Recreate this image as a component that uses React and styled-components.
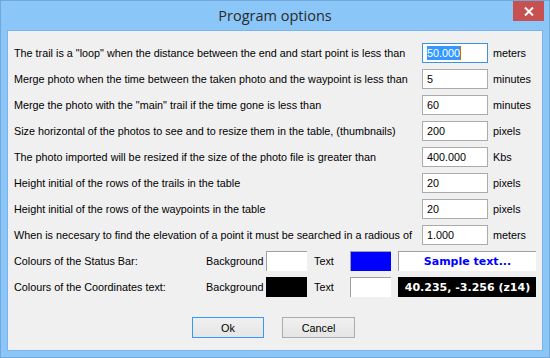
import React from "react";
import styled, { createGlobalStyle } from "styled-components";

const GlobalStyle = createGlobalStyle`
  html, body { margin: 0; padding: 0; }
  body { font-family: "Liberation Sans", Arial, sans-serif; }
  * { box-sizing: border-box; }
`;

const Window = styled.div`
  width: 550px;
  height: 358px;
  background: #8bc6f8;
  border: 1px solid #73a7da;
  display: flex;
  flex-direction: column;
`;

const TitleBar = styled.div`
  height: 29px;
  display: grid;
  grid-template-columns: 1fr auto 1fr;
  align-items: start;
`;

const Title = styled.div`
  grid-column: 2;
  font-family: "Open Sans", "Noto Sans", sans-serif;
  font-size: 14.5px;
  color: #2a2a2a;
  line-height: 30px;
`;

const CloseButton = styled.div`
  grid-column: 3;
  justify-self: end;
  width: 31px;
  height: 20px;
  margin-right: 5px;
  background: #c75050;
  display: flex;
  align-items: center;
  justify-content: center;
`;

const Client = styled.div`
  flex: 1;
  margin: 0 6px 6px 6px;
  background: #f0f0f0;
  border: 1px solid #7db3e8;
  padding: 12px 6px 0 6px;
  display: flex;
  flex-direction: column;
`;

const Rows = styled.div`
  display: flex;
  flex-direction: column;
  gap: 6px;
`;

const OptionRow = styled.div`
  display: grid;
  grid-template-columns: 408px 66px auto;
  align-items: center;
  height: 20px;
  font-size: 10.8px;
  color: #000;
`;

const Label = styled.span`
  white-space: nowrap;
`;

const Input = styled.div`
  height: 20px;
  border: 1px solid ${(p) => (p.$focused ? "#3f91e2" : "#ababab")};
  background: #fff;
  padding-left: 4px;
  display: flex;
  align-items: center;
  font-size: 10.8px;
`;

const Selected = styled.span`
  background: #3399ff;
  color: #fff;
  line-height: 14px;
  border-right: 1px solid #d06a00;
`;

const Unit = styled.span`
  padding-left: 5px;
`;

const ColourRow = styled.div`
  display: flex;
  align-items: center;
  height: 20px;
  font-size: 10.8px;
  color: #000;
`;

const ColourLabel = styled.span`
  width: ${(p) => p.$w}px;
  padding-left: ${(p) => p.$pl || 0}px;
  white-space: nowrap;
`;

const Swatch = styled.div`
  width: 41px;
  height: 20px;
  background: ${(p) => p.$color};
  border-top: 1px solid ${(p) => (p.$color === "#000000" ? "#000" : "#a0a0a0")};
  border-left: 1px solid ${(p) => (p.$color === "#000000" ? "#000" : "#a0a0a0")};
`;

const Sample = styled.div`
  width: 138px;
  height: 20px;
  margin-left: 7px;
  background: ${(p) => p.$bg};
  color: ${(p) => p.$fg};
  border-top: 1px solid ${(p) => (p.$bg === "#000000" ? "#000" : "#a0a0a0")};
  border-left: 1px solid ${(p) => (p.$bg === "#000000" ? "#000" : "#a0a0a0")};
  font-family: "DejaVu Sans", Verdana, sans-serif;
  font-weight: bold;
  font-size: 11px;
  display: flex;
  align-items: center;
  justify-content: center;
`;

const Buttons = styled.div`
  display: flex;
  justify-content: center;
  gap: 18px;
  margin-top: 20px;
  padding-right: 3px;
`;

const Button = styled.div`
  width: ${(p) => p.$w}px;
  height: 21px;
  border: 1px solid ${(p) => (p.$default ? "#3399ff" : "#acacac")};
  background: linear-gradient(#f0f0f0, #e5e5e5);
  font-size: 10.8px;
  display: flex;
  align-items: center;
  justify-content: center;
  color: #000;
`;

const options = [
  ['The trail is a "loop" when the distance between the end and start point is less than', "50.000", "meters", true],
  ["Merge photo when the time between the taken photo and the waypoint is less than", "5", "minutes"],
  ['Merge the photo with the "main" trail if the time gone is less than', "60", "minutes"],
  ["Size horizontal of the photos to see and to resize them in the table, (thumbnails)", "200", "pixels"],
  ["The photo imported will be resized if the size of the photo file is greater than", "400.000", "Kbs"],
  ["Height initial of the rows of the trails in the table", "20", "pixels"],
  ["Height initial of the rows of the waypoints in the table", "20", "pixels"],
  ["When is necesary to find the elevation of a point it must be searched in a radious of", "1.000", "meters"],
];

const colours = [
  ["Colours of the Status Bar:", "#ffffff", "#0000ff", "Sample text..."],
  ["Colours of the Coordinates text:", "#000000", "#ffffff", "40.235, -3.256 (z14)"],
];

export default function App() {
  return (
    <>
      <GlobalStyle />
      <Window>
        <TitleBar>
          <Title>Program options</Title>
          <CloseButton>
            <svg width="10" height="9" viewBox="0 0 10 9">
              <path d="M1 0.5 L9 8.5 M9 0.5 L1 8.5" stroke="#fff" strokeWidth="2" />
            </svg>
          </CloseButton>
        </TitleBar>
        <Client>
          <Rows>
            {options.map(([label, value, unit, focused]) => (
              <OptionRow key={label}>
                <Label>{label}</Label>
                <Input $focused={focused}>
                  {focused ? <Selected>{value}</Selected> : value}
                </Input>
                <Unit>{unit}</Unit>
              </OptionRow>
            ))}
            {colours.map(([label, bg, fg, sample]) => (
              <ColourRow key={label}>
                <ColourLabel $w={192}>{label}</ColourLabel>
                <ColourLabel $w={60}>Background</ColourLabel>
                <Swatch $color={bg} />
                <ColourLabel $w={43} $pl={7}>Text</ColourLabel>
                <Swatch $color={fg} />
                <Sample $bg={bg} $fg={fg}>{sample}</Sample>
              </ColourRow>
            ))}
          </Rows>
          <Buttons>
            <Button $w={72} $default>Ok</Button>
            <Button $w={73}>Cancel</Button>
          </Buttons>
        </Client>
      </Window>
    </>
  );
}
